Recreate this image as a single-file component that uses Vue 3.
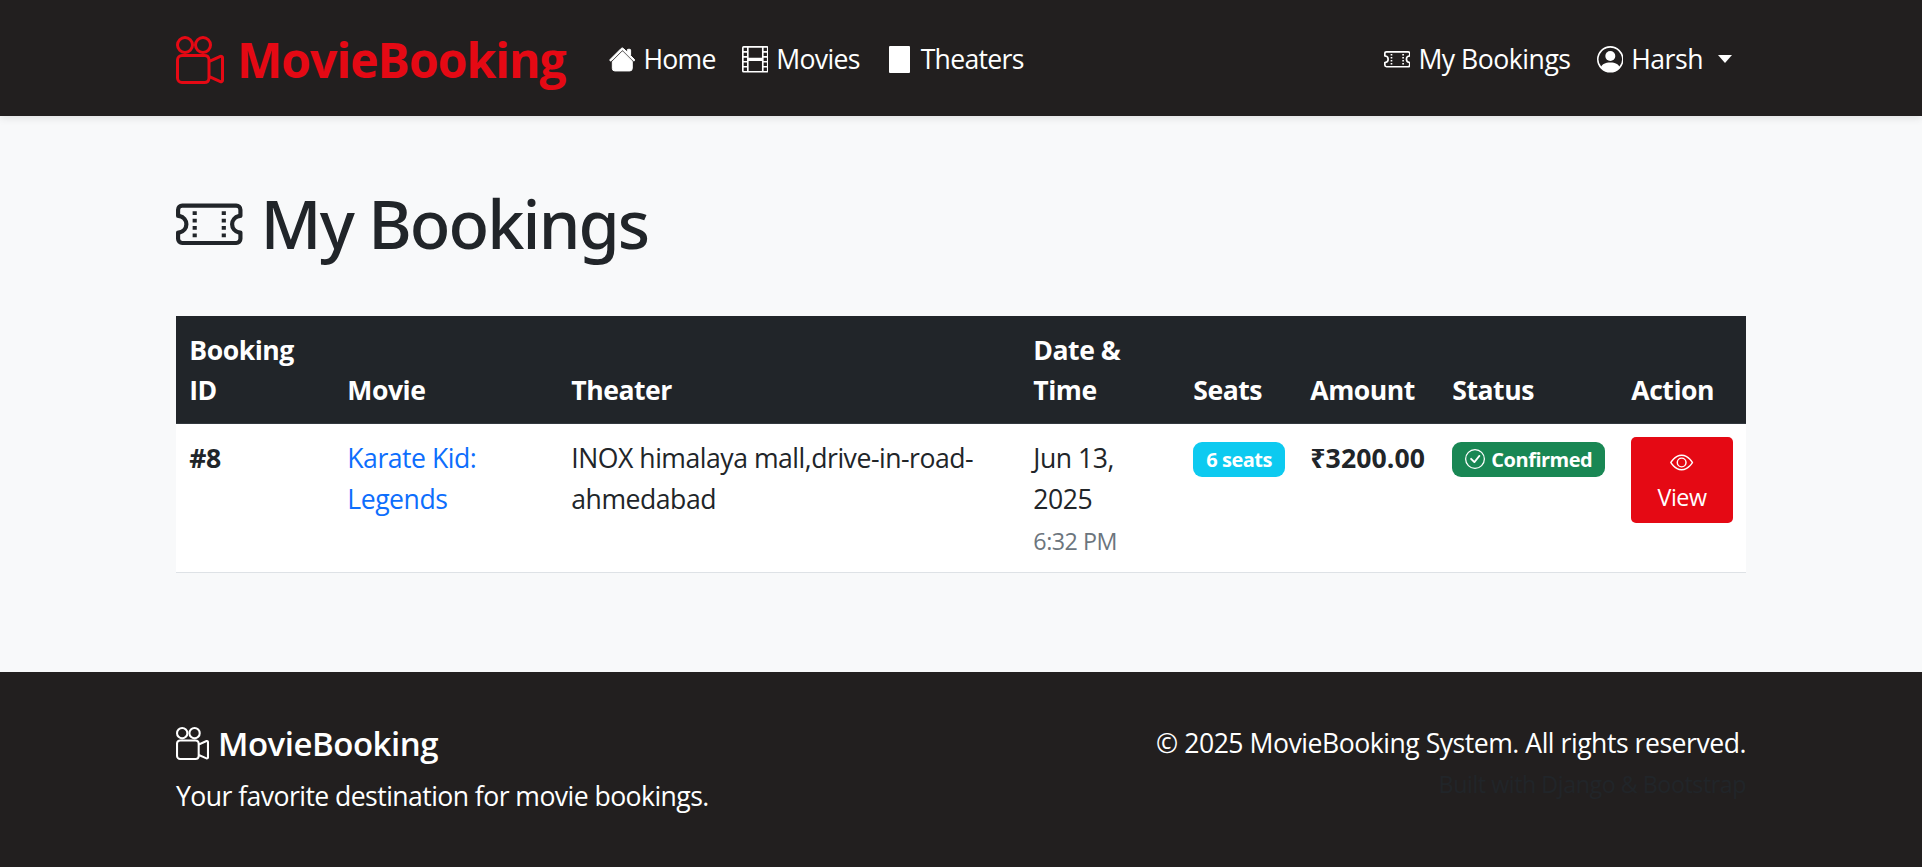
<template>
  <div class="page">
    <nav class="navbar">
      <div class="container nav-inner">
        <a class="brand" href="#">
          <svg class="bi" viewBox="0 0 16 16" fill="currentColor">
            <path d="M6 3a3 3 0 1 1-6 0 3 3 0 0 1 6 0M1 3a2 2 0 1 0 4 0 2 2 0 0 0-4 0" />
            <path d="M9 6h.5a2 2 0 0 1 1.983 1.738l3.11-1.382A1 1 0 0 1 16 7.269v7.462a1 1 0 0 1-1.406.913l-3.111-1.382A2 2 0 0 1 9.5 16H2a2 2 0 0 1-2-2V8a2 2 0 0 1 2-2zm6 8.73V7.27l-3.5 1.555v4.35zM1 8v6a1 1 0 0 0 1 1h7.5a1 1 0 0 0 1-1V8a1 1 0 0 0-1-1H2a1 1 0 0 0-1 1" />
            <path d="M9 6a3 3 0 1 0 0-6 3 3 0 0 0 0 6M7 3a2 2 0 1 1 4 0 2 2 0 0 1-4 0" />
          </svg>
          MovieBooking
        </a>
        <div class="nav-links nav-left">
          <a class="nav-link" href="#">
            <svg class="bi house" viewBox="0 0 16 16" fill="currentColor">
              <path d="M8.707 1.5a1 1 0 0 0-1.414 0L.646 8.146a.5.5 0 0 0 .708.708L8 2.207l6.646 6.647a.5.5 0 0 0 .708-.708L13 5.793V2.5a.5.5 0 0 0-.5-.5h-1a.5.5 0 0 0-.5.5v1.293z" />
              <path d="m8 3.293 6 6V13.5a1.5 1.5 0 0 1-1.5 1.5h-9A1.5 1.5 0 0 1 2 13.5V9.293z" />
            </svg>
            Home
          </a>
          <a class="nav-link" href="#">
            <svg class="bi" viewBox="0 0 16 16" fill="currentColor">
              <path d="M0 1a1 1 0 0 1 1-1h14a1 1 0 0 1 1 1v14a1 1 0 0 1-1 1H1a1 1 0 0 1-1-1zm4 0v6h8V1zm8 8H4v6h8zM1 1v2h2V1zm2 3H1v2h2zM1 7v2h2V7zm2 3H1v2h2zm-2 3v2h2v-2zM15 1h-2v2h2zm-2 3v2h2V4zm2 3h-2v2h2zm-2 3v2h2v-2zm2 3h-2v2h2z" />
            </svg>
            Movies
          </a>
          <a class="nav-link" href="#">
            <span class="blank-icon"></span>
            Theaters
          </a>
        </div>
        <div class="nav-links nav-right">
          <a class="nav-link" href="#">
            <svg class="bi" viewBox="0 0 16 16" fill="currentColor">
              <path d="M4 4.85v.9h1v-.9zm7 0v.9h1v-.9zm-7 1.8v.9h1v-.9zm7 0v.9h1v-.9zm-7 1.8v.9h1v-.9zm7 0v.9h1v-.9zm-7 1.8v.9h1v-.9zm7 0v.9h1v-.9z" />
              <path d="M1.5 3A1.5 1.5 0 0 0 0 4.5V6a.5.5 0 0 0 .5.5 1.5 1.5 0 1 1 0 3 .5.5 0 0 0-.5.5v1.5A1.5 1.5 0 0 0 1.5 13h13a1.5 1.5 0 0 0 1.5-1.5V10a.5.5 0 0 0-.5-.5 1.5 1.5 0 0 1 0-3A.5.5 0 0 0 16 6V4.5A1.5 1.5 0 0 0 14.5 3zM1 4.5a.5.5 0 0 1 .5-.5h13a.5.5 0 0 1 .5.5v1.05a2.5 2.5 0 0 0 0 4.9v1.05a.5.5 0 0 1-.5.5h-13a.5.5 0 0 1-.5-.5v-1.05a2.5 2.5 0 0 0 0-4.9z" />
            </svg>
            My Bookings
          </a>
          <a class="nav-link" href="#">
            <svg class="bi" viewBox="0 0 16 16" fill="currentColor">
              <path d="M11 6a3 3 0 1 1-6 0 3 3 0 0 1 6 0" />
              <path fill-rule="evenodd" d="M0 8a8 8 0 1 1 16 0A8 8 0 0 1 0 8m8-7a7 7 0 0 0-5.468 11.37C3.242 11.226 4.805 10 8 10s4.757 1.225 5.468 2.37A7 7 0 0 0 8 1" />
            </svg>
            Harsh
            <span class="caret"></span>
          </a>
        </div>
      </div>
    </nav>

    <main class="container main">
      <h1 class="title">
        <svg class="bi" viewBox="0 0 16 16" fill="currentColor">
          <path d="M4 4.85v.9h1v-.9zm7 0v.9h1v-.9zm-7 1.8v.9h1v-.9zm7 0v.9h1v-.9zm-7 1.8v.9h1v-.9zm7 0v.9h1v-.9zm-7 1.8v.9h1v-.9zm7 0v.9h1v-.9z" />
          <path d="M1.5 3A1.5 1.5 0 0 0 0 4.5V6a.5.5 0 0 0 .5.5 1.5 1.5 0 1 1 0 3 .5.5 0 0 0-.5.5v1.5A1.5 1.5 0 0 0 1.5 13h13a1.5 1.5 0 0 0 1.5-1.5V10a.5.5 0 0 0-.5-.5 1.5 1.5 0 0 1 0-3A.5.5 0 0 0 16 6V4.5A1.5 1.5 0 0 0 14.5 3zM1 4.5a.5.5 0 0 1 .5-.5h13a.5.5 0 0 1 .5.5v1.05a2.5 2.5 0 0 0 0 4.9v1.05a.5.5 0 0 1-.5.5h-13a.5.5 0 0 1-.5-.5v-1.05a2.5 2.5 0 0 0 0-4.9z" />
        </svg>
        My Bookings
      </h1>

      <table class="bookings">
        <colgroup>
          <col v-for="w in colWidths" :key="w.name" :style="{ width: w.px + 'px' }" />
        </colgroup>
        <thead>
          <tr>
            <th>Booking ID</th>
            <th>Movie</th>
            <th>Theater</th>
            <th>Date &amp; Time</th>
            <th>Seats</th>
            <th>Amount</th>
            <th>Status</th>
            <th>Action</th>
          </tr>
        </thead>
        <tbody>
          <tr v-for="b in bookings" :key="b.id">
            <td><strong>#{{ b.id }}</strong></td>
            <td><a class="movie-link" href="#">{{ b.movie }}</a></td>
            <td>{{ b.theater }}</td>
            <td>
              {{ b.date }}<br />
              <small class="time">{{ b.time }}</small>
            </td>
            <td><span class="badge badge-info">{{ b.seats }} seats</span></td>
            <td><strong class="amount">₹{{ b.amount }}</strong></td>
            <td>
              <span class="badge badge-success">
                <svg class="bi" viewBox="0 0 16 16" fill="currentColor">
                  <path d="M8 15A7 7 0 1 1 8 1a7 7 0 0 1 0 14m0 1A8 8 0 1 0 8 0a8 8 0 0 0 0 16" />
                  <path d="M10.97 4.97a.235.235 0 0 0-.02.022L7.477 9.417 5.384 7.323a.75.75 0 0 0-1.06 1.06L6.97 11.03a.75.75 0 0 0 1.079-.02l3.992-4.99a.75.75 0 0 0-1.071-1.05" />
                </svg>
                {{ b.status }}
              </span>
            </td>
            <td>
              <a class="view-btn" href="#">
                <svg class="bi" viewBox="0 0 16 16" fill="currentColor">
                  <path d="M16 8s-3-5.5-8-5.5S0 8 0 8s3 5.5 8 5.5S16 8 16 8M1.173 8a13 13 0 0 1 1.66-2.043C4.12 4.668 5.88 3.5 8 3.5s3.879 1.168 5.168 2.457A13 13 0 0 1 14.828 8q-.086.13-.195.288c-.335.48-.83 1.12-1.465 1.755C11.879 11.332 10.119 12.5 8 12.5s-3.879-1.168-5.168-2.457A13 13 0 0 1 1.172 8z" />
                  <path d="M8 5.5a2.5 2.5 0 1 0 0 5 2.5 2.5 0 0 0 0-5M4.5 8a3.5 3.5 0 1 1 7 0 3.5 3.5 0 0 1-7 0" />
                </svg>
                <span>View</span>
              </a>
            </td>
          </tr>
        </tbody>
      </table>
    </main>

    <footer class="footer">
      <div class="container footer-inner">
        <div class="footer-left">
          <h5 class="footer-brand">
            <svg class="bi" viewBox="0 0 16 16" fill="currentColor">
              <path d="M6 3a3 3 0 1 1-6 0 3 3 0 0 1 6 0M1 3a2 2 0 1 0 4 0 2 2 0 0 0-4 0" />
              <path d="M9 6h.5a2 2 0 0 1 1.983 1.738l3.11-1.382A1 1 0 0 1 16 7.269v7.462a1 1 0 0 1-1.406.913l-3.111-1.382A2 2 0 0 1 9.5 16H2a2 2 0 0 1-2-2V8a2 2 0 0 1 2-2zm6 8.73V7.27l-3.5 1.555v4.35zM1 8v6a1 1 0 0 0 1 1h7.5a1 1 0 0 0 1-1V8a1 1 0 0 0-1-1H2a1 1 0 0 0-1 1" />
              <path d="M9 6a3 3 0 1 0 0-6 3 3 0 0 0 0 6M7 3a2 2 0 1 1 4 0 2 2 0 0 1-4 0" />
            </svg>
            MovieBooking
          </h5>
          <p class="footer-text">Your favorite destination for movie bookings.</p>
        </div>
        <div class="footer-right">
          <p class="footer-text">© 2025 MovieBooking System. All rights reserved.</p>
          <p class="footer-muted"><small>Built with Django &amp; Bootstrap</small></p>
        </div>
      </div>
    </footer>
  </div>
</template>

<script setup>
const colWidths = [
  { name: 'id', px: 158 },
  { name: 'movie', px: 224 },
  { name: 'theater', px: 462 },
  { name: 'date', px: 160 },
  { name: 'seats', px: 117 },
  { name: 'amount', px: 142 },
  { name: 'status', px: 179 },
  { name: 'action', px: 128 }
]

const bookings = [
  {
    id: 8,
    movie: 'Karate Kid: Legends',
    theater: 'INOX himalaya mall,drive-in-road-ahmedabad',
    date: 'Jun 13, 2025',
    time: '6:32 PM',
    seats: 6,
    amount: '3200.00',
    status: 'Confirmed'
  }
]
</script>

<style>
html {
  font-size: 26.6px;
}

body {
  margin: 0;
  background: #f8f9fa;
}
</style>

<style scoped>
.page {
  min-height: 867px;
  display: flex;
  flex-direction: column;
  font-family: "Open Sans", "Noto Sans", sans-serif;
  font-size: 26.6px;
  line-height: 1.5;
  letter-spacing: -0.48px;
  color: #212529;
}

.container {
  width: 1570px;
  margin: 0 auto;
}

a {
  text-decoration: none;
  color: inherit;
}

.bi {
  width: 1em;
  height: 1em;
  flex-shrink: 0;
}

.house {
  stroke: currentColor;
  stroke-width: 0.6;
}

.navbar {
  height: 116px;
  background: #221f1f;
  box-shadow: 0 2px 8px rgba(0, 0, 0, 0.1);
  color: #fff;
}

.nav-inner {
  height: 100%;
  box-sizing: border-box;
  padding-top: 3px;
  display: flex;
  align-items: center;
}

.brand {
  display: flex;
  align-items: center;
  gap: 13px;
  font-size: 48px;
  font-weight: 700;
  letter-spacing: -0.94px;
  color: #e50914;
  margin-right: 43px;
}

.nav-links {
  display: flex;
  align-items: center;
  gap: 26px;
}

.nav-left {
  letter-spacing: -0.7px;
}

.nav-right {
  margin-left: auto;
  padding-right: 14px;
}

.nav-link {
  display: flex;
  align-items: center;
  gap: 8px;
  color: #fff;
}

.blank-icon {
  width: 21px;
  height: 27px;
  margin: 0 3px;
  border-radius: 1px;
  background: #fff;
}

.caret {
  margin-left: 7px;
  border-top: 8px solid #fff;
  border-left: 7.6px solid transparent;
  border-right: 7.6px solid transparent;
}

.main {
  padding: 68px 0 60px;
}

.title {
  display: flex;
  align-items: center;
  gap: 18px;
  margin: 0 0 52px;
  font-family: "Noto Sans", "Open Sans", sans-serif;
  font-size: 66.5px;
  font-weight: 500;
  line-height: 1.2;
  letter-spacing: -1.9px;
}

.bookings {
  width: 100%;
  table-layout: fixed;
  border-collapse: collapse;
  background: #fff;
}

.bookings th {
  padding: 15px 13.3px 12.3px;
  background: #212529;
  border-bottom: 1px solid #32383e;
  color: #fff;
  font-weight: 700;
  text-align: left;
  vertical-align: bottom;
}

.bookings td {
  padding: 14px 13.3px 10px;
  line-height: 41px;
  vertical-align: top;
  border-bottom: 1px solid #dee2e6;
}

.movie-link {
  color: #0d6efd;
}

.amount {
  letter-spacing: 0.1px;
}

.time {
  font-size: 23.3px;
  color: #6c757d;
}

.badge {
  display: inline-flex;
  align-items: center;
  gap: 6px;
  margin-top: 4px;
  padding: 5px 13px;
  border-radius: 9px;
  font-size: 20px;
  font-weight: 700;
  line-height: 25px;
  white-space: nowrap;
  vertical-align: top;
  color: #fff;
}

.badge-info {
  background: #0dcaf0;
}

.badge-success {
  background: #198754;
}

.view-btn {
  display: flex;
  flex-direction: column;
  align-items: center;
  margin-top: -1px;
  padding: 8px 0;
  border-radius: 5px;
  background: #e50914;
  color: #fff;
  font-size: 23.3px;
  line-height: 35px;
}

.view-btn .bi {
  height: 35px;
}

.footer {
  margin-top: auto;
  height: 195px;
  background: #221f1f;
  color: #fff;
}

.footer-inner {
  display: flex;
  justify-content: space-between;
  padding-top: 52px;
}

.footer-brand {
  display: flex;
  align-items: center;
  gap: 9px;
  margin: 0 0 13px;
  font-size: 33px;
  font-weight: 600;
  line-height: 1.2;
}

.footer-left .footer-text {
  letter-spacing: -0.56px;
}

.footer-text {
  margin: 0;
}

.footer-right {
  text-align: right;
}

.footer-muted {
  margin: 0;
  color: #212529;
}

.footer-muted small {
  font-size: 23.3px;
}
</style>
